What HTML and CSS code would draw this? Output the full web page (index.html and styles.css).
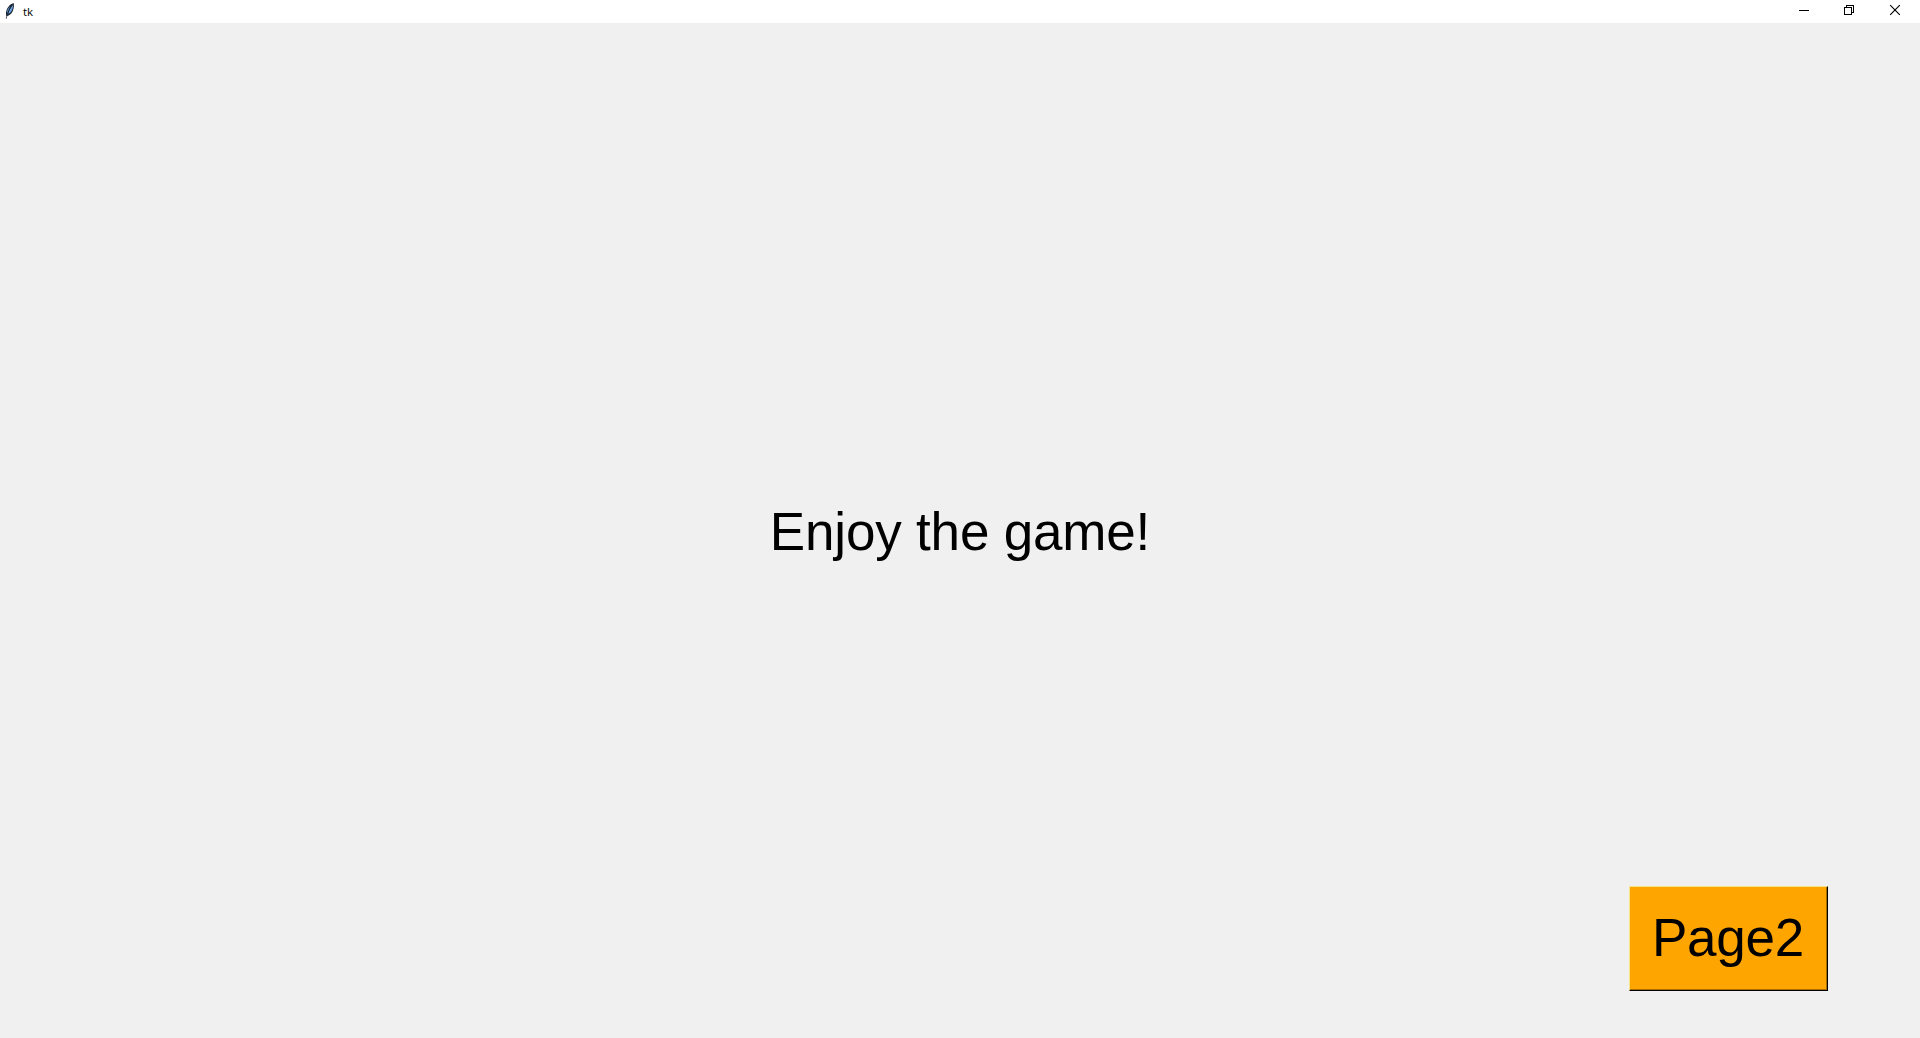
FILE: index.html
```html
<!DOCTYPE html>
<html lang="en">
<head>
<meta charset="utf-8">
<title>tk</title>
<link rel="stylesheet" href="styles.css">
</head>
<body>
<header class="titlebar">
  <svg class="feather" width="16" height="16" viewBox="0 0 16 16" aria-hidden="true">
    <path d="M4.3 13.2C3.3 9.5 4.6 5.5 7.2 2.8C8.6 1.3 10.6 0 11.8 .2C12.3 4 11.4 7.8 9.5 10.3C8.2 11.9 6 13 5 13Z" fill="#18202b"/>
    <path d="M5 10.8C4.4 7.6 6.2 4.8 8.2 3.2C7 6 5.9 8.3 5 10.8Z" fill="#5c93d6"/>
    <path d="M6.2 10.9C7.2 7.5 8.9 4.4 11 1.6C11.2 5.4 9.8 9.7 6.2 10.9Z" fill="#6ba3e4"/>
    <path d="M4.2 15.8C5 10.8 7.2 6.2 10.4 2" fill="none" stroke="#273444" stroke-width=".8"/>
  </svg>
  <span class="title">tk</span>
  <div class="controls">
    <svg width="46" height="23" viewBox="0 0 46 23" shape-rendering="crispEdges" aria-label="Minimize"><path d="M18 10.5H28" stroke="#000"/></svg>
    <svg width="45" height="23" viewBox="0 0 45 23" shape-rendering="crispEdges" aria-label="Restore" fill="none" stroke="#000"><path d="M17.5 7.5H24.5V14.5H17.5ZM19.5 7V5.5H26.5V12.5H25"/></svg>
    <svg width="47" height="23" viewBox="0 0 47 23" aria-label="Close"><path d="M18.2 5.2L27.8 14.8M27.8 5.2L18.2 14.8" stroke="#000" stroke-width="1.15"/></svg>
  </div>
</header>
<main class="page">
  <p class="message">Enjoy the game!</p>
  <button class="next" type="button">Page2</button>
</main>
</body>
</html>
```
FILE: styles.css
```css
* { box-sizing: border-box; }
body {
  margin: 0;
  height: 100vh;
  display: flex;
  flex-direction: column;
  overflow: hidden;
  background: #f0f0f0;
  color: #000;
  font-family: "Liberation Sans", Arial, sans-serif;
}
.titlebar {
  flex: none;
  height: 23px;
  display: flex;
  align-items: center;
  padding: 0 1px 0 2px;
  background: #fff;
}
.feather { margin-top: -1px; }
.title {
  margin-left: 5px;
  font: 11.5px/23px "Open Sans", sans-serif;
}
.controls {
  margin-left: auto;
  display: flex;
}
.page {
  flex: 1;
  display: grid;
  grid-template-rows: 863px 105px;
  padding-right: 92px;
}
.message {
  margin: 478px -92px 0 0;
  font-size: 53px;
  line-height: 61px;
  letter-spacing: -0.18px;
  text-align: center;
}
.next {
  justify-self: end;
  width: 199px;
  height: 105px;
  padding: 0 1px 3px 0;
  border: 1px solid;
  border-color: #f3e58c #000 #000 #f3e58c;
  border-radius: 0;
  background: #ffa500;
  box-shadow: inset -1px -1px #a86d00;
  color: #000;
  font: 53px/61px "Liberation Sans", Arial, sans-serif;
  letter-spacing: -0.25px;
}
```
